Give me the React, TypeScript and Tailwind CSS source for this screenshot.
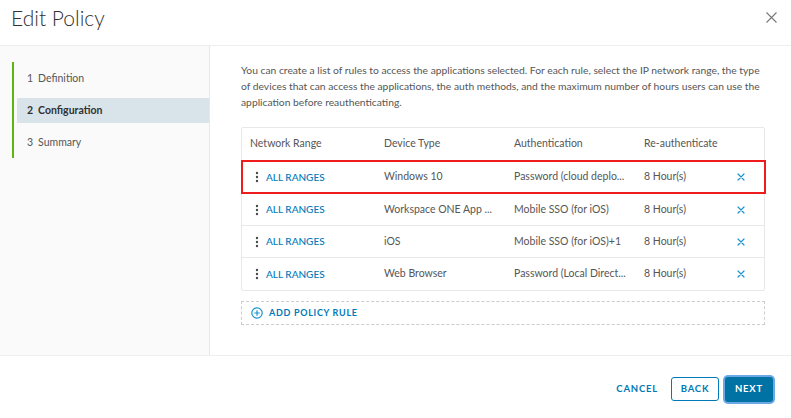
import React from "react";

type Rule = {
  device: string;
  auth: string;
  hours: string;
};

const rules: Rule[] = [
  { device: "Windows 10", auth: "Password (cloud deplo...", hours: "8 Hour(s)" },
  { device: "Workspace ONE App ...", auth: "Mobile SSO (for iOS)", hours: "8 Hour(s)" },
  { device: "iOS", auth: "Mobile SSO (for iOS)+1", hours: "8 Hour(s)" },
  { device: "Web Browser", auth: "Password (Local Direct...", hours: "8 Hour(s)" },
];

const steps = ["Definition", "Configuration", "Summary"];

function Dots() {
  return (
    <svg width="4" height="12" viewBox="0 0 4 12" className="shrink-0">
      <circle cx="2" cy="2" r="1.2" fill="#4a4a4a" />
      <circle cx="2" cy="6" r="1.2" fill="#4a4a4a" />
      <circle cx="2" cy="10" r="1.2" fill="#4a4a4a" />
    </svg>
  );
}

function SmallX() {
  return (
    <svg width="8" height="8" viewBox="0 0 8 8">
      <path d="M1 1 L7 7 M7 1 L1 7" stroke="#1b95d0" strokeWidth="1.2" strokeLinecap="round" />
    </svg>
  );
}

export default function App() {
  return (
    <div
      className="w-[791px] h-[418px] flex flex-col bg-white text-[#565656] overflow-hidden"
      style={{ fontFamily: "Lato, 'Liberation Sans', sans-serif" }}
    >
      {/* Header */}
      <div className="h-[46px] shrink-0 flex items-center justify-between pl-[11px] pr-[14px] border-b border-[#eeeeee]">
        <h1 className="text-[21px] font-light text-[#313131] -mt-[9px]">Edit Policy</h1>
        <svg width="11" height="11" viewBox="0 0 11 11" className="-mt-[10px]">
          <path d="M0.5 0.5 L10.5 10.5 M10.5 0.5 L0.5 10.5" stroke="#777777" strokeWidth="1.1" />
        </svg>
      </div>

      {/* Body */}
      <div className="h-[309px] shrink-0 flex">
        <div className="w-[210px] shrink-0 bg-[#fafafa] border-r border-[#e8e8e8] pt-[16px] pl-[12px]">
          <div className="border-l-2 border-[#60b515] pl-[3px]">
            {steps.map((s, i) => (
              <div key={s} className="h-8 flex items-center">
                <div
                  className={
                    "h-[25px] w-full flex items-center pl-[10px] pt-[1px] text-[10.5px] " +
                    (i === 1 ? "bg-[#d9e4ea] font-bold text-[#313131]" : "text-[#565656]")
                  }
                >
                  <span className="mr-[5px]">{i + 1}</span>
                  {s}
                </div>
              </div>
            ))}
          </div>
        </div>

        <div className="flex-1 pl-[31px] pr-[26px] pt-[16px]">
          <p className="text-[10.3px] leading-[16px] text-[#565656]">
            You can create a list of rules to access the applications selected. For each rule, select the IP network
            range, the type of devices that can access the applications, the auth methods, and the maximum number of
            hours users can use the application before reauthenticating.
          </p>

          <div className="mt-[17px] border border-[#e8e8e8] rounded-[2px] text-[10.5px]">
            <div className="h-[33px] flex items-center border-b border-[#e8e8e8] text-[#565656]">
              <div className="w-[142px] pl-[8px]">Network Range</div>
              <div className="w-[130px]">Device Type</div>
              <div className="w-[130px]">Authentication</div>
              <div className="flex-1">Re-authenticate</div>
            </div>
            {rules.map((r, i) => (
              <div
                key={i}
                className={
                  "relative flex items-center " +
                  (i === 0 ? "h-[33px] " : "h-[32px] ") +
                  (i < rules.length - 1 ? "border-b border-[#e8e8e8]" : "")
                }
              >
                <div className="w-[142px] pl-[13px] flex items-center gap-[7px]">
                  <Dots />
                  <span className="text-[#0079b8] text-[10px] font-medium">ALL RANGES</span>
                </div>
                <div className="w-[130px]">{r.device}</div>
                <div className="w-[130px]">{r.auth}</div>
                <div className="w-[93px]">{r.hours}</div>
                <SmallX />
                {i === 0 && (
                  <div className="absolute -left-[1px] -right-[2px] -top-[1px] -bottom-[1px] border-2 border-[#ee1c1c] pointer-events-none" />
                )}
              </div>
            ))}
          </div>

          <div className="mt-[10px] h-[24px] border border-dashed border-[#cccccc] flex items-center pl-[9px] gap-[6px]">
            <svg width="12" height="12" viewBox="0 0 12 12">
              <circle cx="6" cy="6" r="5.2" fill="none" stroke="#1b95d0" strokeWidth="1.2" />
              <path d="M6 3.3 V8.7 M3.3 6 H8.7" stroke="#1b95d0" strokeWidth="1.2" />
            </svg>
            <span className="text-[9px] font-bold tracking-[0.7px] text-[#0079b8]">ADD POLICY RULE</span>
          </div>
        </div>
      </div>

      {/* Footer */}
      <div className="flex-1 border-t border-[#eeeeee] flex items-center justify-end pr-[18px] gap-[6px] pt-[4px]">
        <button className="h-[24px] mr-[7px] text-[9.5px] font-bold tracking-[0.8px] text-[#0079b8]">
          CANCEL
        </button>
        <button className="h-[24px] w-[48px] border border-[#0079b8] rounded-[3px] text-[9.5px] font-bold tracking-[0.8px] text-[#0079b8] bg-white">
          BACK
        </button>
        <button className="h-[25px] w-[48px] rounded-[3px] bg-[#0072a3] text-white text-[9.5px] font-bold tracking-[0.8px] ring-2 ring-[#6aa8e6]">
          NEXT
        </button>
      </div>
    </div>
  );
}
